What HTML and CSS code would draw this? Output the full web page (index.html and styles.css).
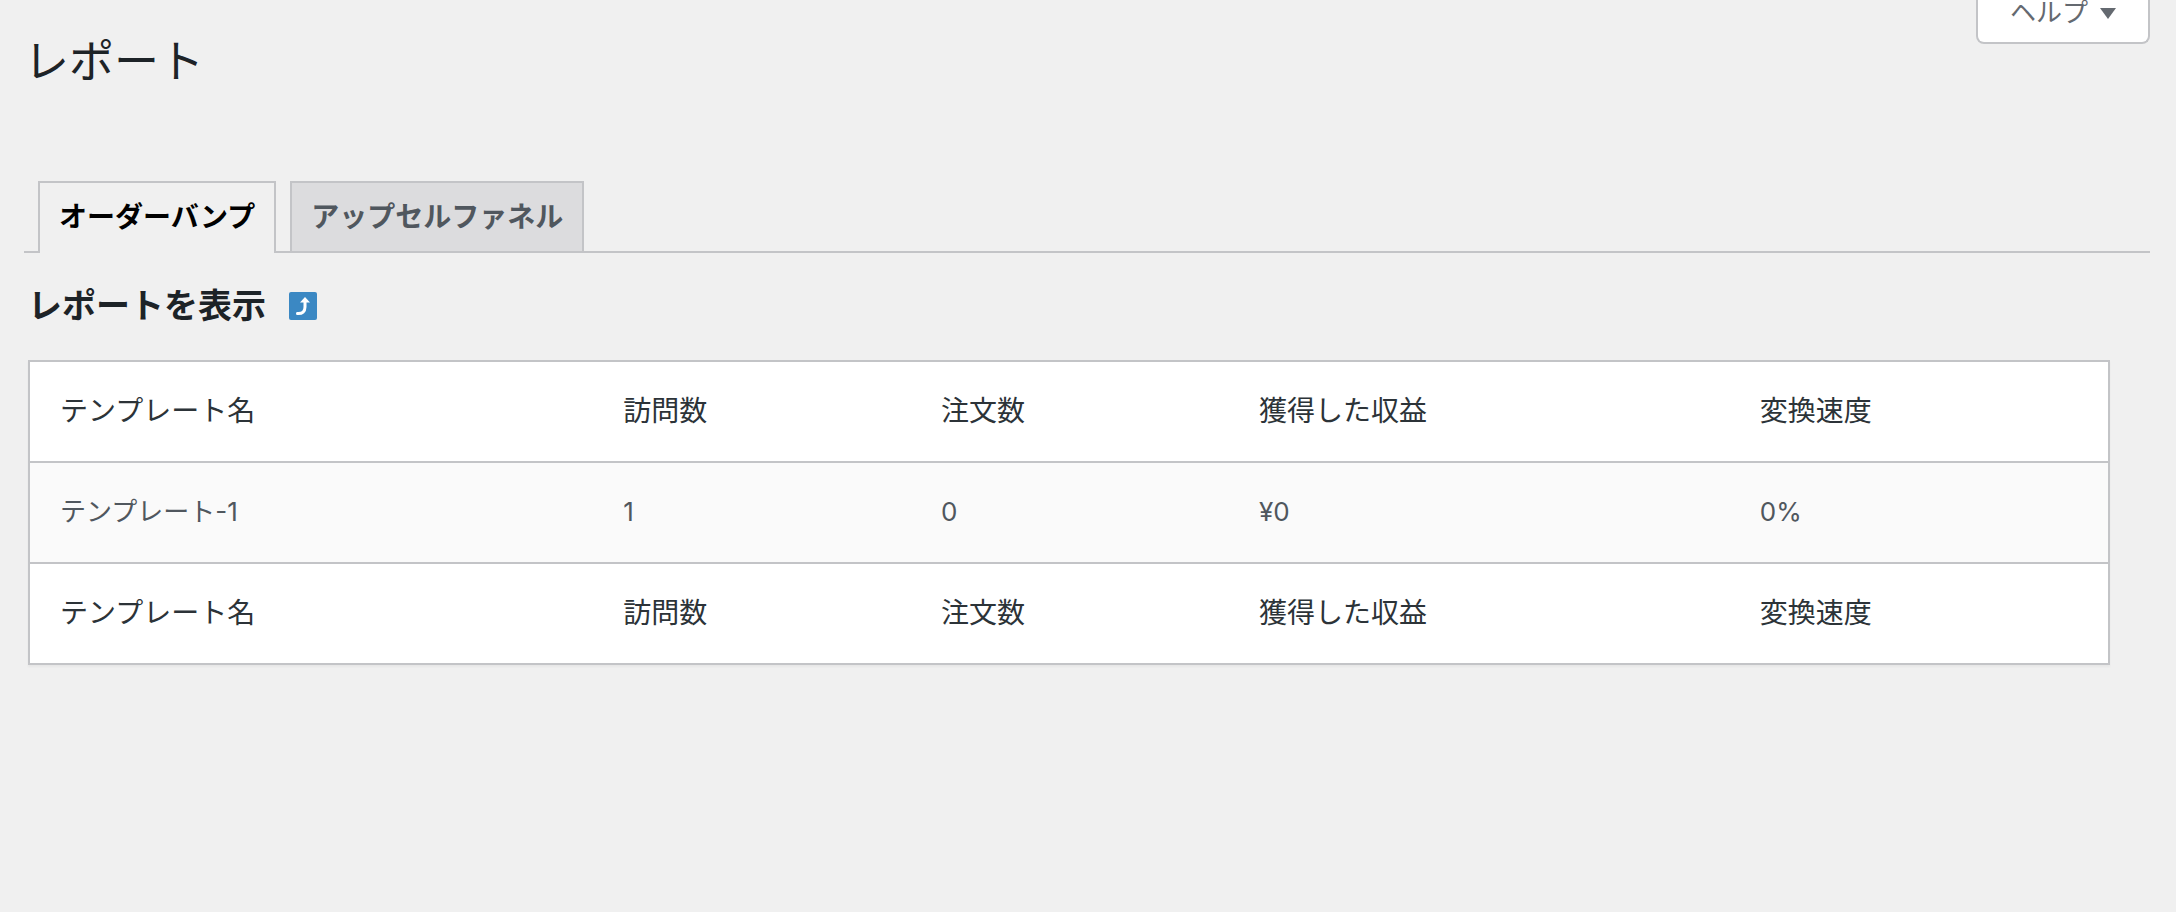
FILE: index.html
```html
<!DOCTYPE html>
<html lang="ja">
<head>
    <meta charset="UTF-8">
    <meta name="viewport" content="width=device-width, initial-scale=1.0">
    <title>レポート</title>
    <link rel="stylesheet" href="styles.css">
</head>
<body>

<div class="wrap">
    <header class="page-header">
        <h1>レポート</h1>
        <button type="button" class="help-button">
            ヘルプ
            <svg class="arrow" viewBox="0 0 16 11" aria-hidden="true"><path d="M0 0h16L8 11z"/></svg>
        </button>
    </header>

    <nav class="nav-tabs">
        <a href="#order-bump" class="nav-tab nav-tab-active">オーダーバンプ</a>
        <a href="#upsell-funnel" class="nav-tab">アップセルファネル</a>
    </nav>

    <main class="report">
        <div class="report-title">
            <h2>レポートを表示</h2>
            <a href="#back" class="back-link" aria-label="戻る">
                <svg viewBox="0 0 28 28" aria-hidden="true">
                    <rect width="28" height="28" rx="2" fill="#3b88c3"/>
                    <path d="M8.500 21.500c5 .3 7.500-2 7.500-6.500V9" fill="none" stroke="#fff" stroke-width="3" stroke-linecap="round"/>
                    <path d="M16 5l5 5.500h-10z" fill="#fff"/>
                </svg>
            </a>
        </div>

        <table class="report-table">
            <colgroup>
                <col class="col-name">
                <col class="col-count">
                <col class="col-count">
                <col class="col-revenue">
                <col class="col-rate">
            </colgroup>
            <thead>
                <tr>
                    <th scope="col">テンプレート名</th>
                    <th scope="col">訪問数</th>
                    <th scope="col">注文数</th>
                    <th scope="col">獲得した収益</th>
                    <th scope="col">変換速度</th>
                </tr>
            </thead>
            <tbody>
                <tr>
                    <td>テンプレート-1</td>
                    <td>1</td>
                    <td>0</td>
                    <td>¥0</td>
                    <td>0%</td>
                </tr>
            </tbody>
            <tfoot>
                <tr>
                    <th scope="col">テンプレート名</th>
                    <th scope="col">訪問数</th>
                    <th scope="col">注文数</th>
                    <th scope="col">獲得した収益</th>
                    <th scope="col">変換速度</th>
                </tr>
            </tfoot>
        </table>
    </main>
</div>

</body>
</html>
```
FILE: styles.css
```css
* {
    box-sizing: border-box;
    margin: 0;
    padding: 0;
}
body {
    font-family: Inter, "Noto Sans CJK JP", sans-serif;
    font-size: 26px;
    background-color: #f0f0f0;
    color: #50575e;
}
.wrap {
    padding: 0 26px 40px 24px;
}
.page-header {
    display: flex;
    justify-content: space-between;
    align-items: flex-start;
}
h1 {
    padding-top: 32px;
    font-size: 45px;
    font-weight: 400;
    line-height: 60px;
    color: #1d2327;
}
.help-button {
    display: flex;
    align-items: center;
    gap: 12px;
    padding: 1px 32px 17px;
    border: 2px solid #c3c4c7;
    border-top: none;
    border-radius: 0 0 8px 8px;
    background-color: #fff;
    color: #646970;
    font-family: inherit;
    font-size: 26px;
    line-height: 24px;
    cursor: pointer;
}
.arrow {
    width: 16px;
    height: 11px;
    fill: #646970;
}
.nav-tabs {
    display: flex;
    gap: 14px;
    margin-top: 89px;
    padding-left: 14px;
    border-bottom: 2px solid #c3c4c7;
}
.nav-tab {
    padding: 11px 19px;
    border: 2px solid #c3c4c7;
    border-bottom: none;
    background-color: #dcdcde;
    color: #50575e;
    font-size: 28px;
    font-weight: 700;
    line-height: 46px;
    text-decoration: none;
}
.nav-tab-active {
    margin-bottom: -2px;
    padding-bottom: 13px;
    background-color: #f0f0f0;
    color: #000;
}
.report {
    margin: 28px 40px 0 4px;
}
.report-title {
    display: flex;
    align-items: center;
    gap: 23px;
}
h2 {
    font-size: 34px;
    font-weight: 700;
    line-height: 50px;
    color: #1d2327;
}
.back-link svg {
    display: block;
    width: 28px;
    height: 28px;
}
.report-table {
    width: 100%;
    margin-top: 29px;
    table-layout: fixed;
    border-collapse: separate;
    border-spacing: 0;
    border: 2px solid #c3c4c7;
    background-color: #fff;
    box-shadow: 0 2px 2px rgba(0, 0, 0, 0.04);
}
.col-name {
    width: 27.1%;
}
.col-count {
    width: 15.3%;
}
.col-revenue {
    width: 24.1%;
}
.col-rate {
    width: 18.2%;
}
th, td {
    padding: 27px 30px 28px;
    line-height: 44px;
    text-align: left;
}
th {
    font-size: 28px;
    font-weight: 400;
    color: #2c3338;
}
tbody tr {
    background-color: #fafafa;
}
tbody td {
    border-top: 2px solid #c3c4c7;
    border-bottom: 2px solid #c3c4c7;
}
```
